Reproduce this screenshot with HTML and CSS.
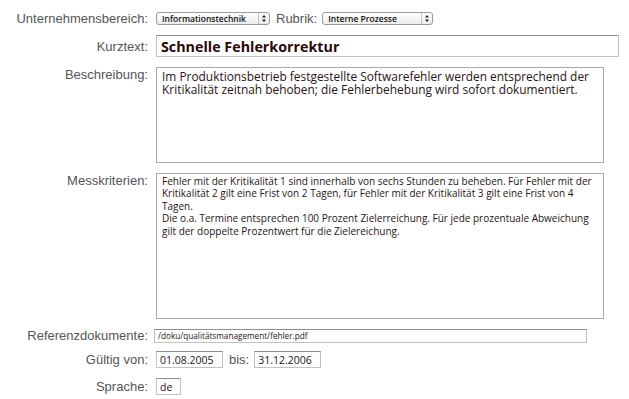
FILE: index.html
```html
<!DOCTYPE html>
<html lang="de">
<head>
    <meta charset="UTF-8">
    <meta name="viewport" content="width=device-width, initial-scale=1.0">
    <title>Messgröße bearbeiten</title>
    <link rel="stylesheet" href="styles.css">
</head>
<body>

    <form class="entry" id="kennzahlForm">
        <div class="row row-head">
            <label class="lbl" for="bereich">Unternehmensbereich:</label>
            <span class="popup popup-bereich">
                <select id="bereich" name="bereich">
                    <option>Informationstechnik</option>
                </select>
                <svg class="popup-arrows" width="11" height="11" viewBox="0 0 11 11">
                    <line x1="0.5" y1="0" x2="0.5" y2="11" stroke="#c4c4c4"/>
                    <path d="M4 4.5 L6 2 L8 4.5 Z" fill="#222"/>
                    <path d="M4 6.5 L6 9 L8 6.5 Z" fill="#222"/>
                </svg>
            </span>
            <label class="lbl-inline" for="rubrik">Rubrik:</label>
            <span class="popup popup-rubrik">
                <select id="rubrik" name="rubrik">
                    <option>Interne Prozesse</option>
                </select>
                <svg class="popup-arrows" width="11" height="11" viewBox="0 0 11 11">
                    <line x1="0.5" y1="0" x2="0.5" y2="11" stroke="#c4c4c4"/>
                    <path d="M4 4.5 L6 2 L8 4.5 Z" fill="#222"/>
                    <path d="M4 6.5 L6 9 L8 6.5 Z" fill="#222"/>
                </svg>
            </span>
        </div>

        <div class="row row-center">
            <label class="lbl" for="kurztext">Kurztext:</label>
            <input type="text" class="field field-title" id="kurztext" name="kurztext" value="Schnelle Fehlerkorrektur">
        </div>

        <div class="row">
            <label class="lbl" for="beschreibung">Beschreibung:</label>
            <textarea class="field area area-short" id="beschreibung" name="beschreibung">Im Produktionsbetrieb festgestellte Softwarefehler werden entsprechend der
Kritikalität zeitnah behoben; die Fehlerbehebung wird sofort dokumentiert.</textarea>
        </div>

        <div class="row row-tight">
            <label class="lbl" for="messkriterien">Messkriterien:</label>
            <textarea class="field area area-long" id="messkriterien" name="messkriterien">Fehler mit der Kritikalität 1 sind innerhalb von sechs Stunden zu beheben. Für Fehler mit der
Kritikalität 2 gilt eine Frist von 2 Tagen, für Fehler mit der Kritikalität 3 gilt eine Frist von 4
Tagen.
Die o.a. Termine entsprechen 100 Prozent Zielerreichung. Für jede prozentuale Abweichung
gilt der doppelte Prozentwert für die Zielereichung.</textarea>
        </div>

        <div class="row row-center row-narrow">
            <label class="lbl" for="referenz">Referenzdokumente:</label>
            <input type="text" class="field field-ref" id="referenz" name="referenz" value="/doku/qualitätsmanagement/fehler.pdf">
        </div>

        <div class="row row-center">
            <label class="lbl" for="von">Gültig von:</label>
            <input type="text" class="field field-date" id="von" name="von" value="01.08.2005">
            <label class="lbl-inline" for="bis">bis:</label>
            <input type="text" class="field field-date" id="bis" name="bis" value="31.12.2006">
        </div>

        <div class="row row-center">
            <label class="lbl" for="sprache">Sprache:</label>
            <input type="text" class="field field-lang" id="sprache" name="sprache" value="de">
        </div>
    </form>

</body>
</html>
```

FILE: styles.css
```css
/* Grundlayout */
body {
    margin: 0;
    font-family: "Liberation Sans", Arial, sans-serif;
    font-size: 13px;
    color: #555;
    background-color: #fff;
}

.entry {
    padding-top: 12px;
}

/* Zeilen mit Beschriftung links */
.row {
    display: flex;
    align-items: flex-start;
    margin-bottom: 10px;
}

.row-center {
    align-items: center;
}

.row-head {
    align-items: center;
    height: 13px;
}

.row-tight {
    margin-bottom: 9px;
}

.row-narrow {
    margin-bottom: 8px;
}

.lbl {
    flex: none;
    width: 148px;
    padding-right: 8px;
    text-align: right;
    line-height: 15px;
}

.lbl-inline {
    padding: 0 5px 0 6px;
    line-height: 15px;
}

/* Auswahllisten im Mac-Stil */
.popup {
    position: relative;
    display: inline-block;
    height: 13px;
    box-sizing: border-box;
    border: 1px solid #9a9a9a;
    border-radius: 3px;
    background: linear-gradient(#ffffff, #ececec);
}

.popup-bereich {
    width: 114px;
}

.popup-rubrik {
    width: 111px;
}

.popup select {
    appearance: none;
    -webkit-appearance: none;
    border: none;
    background: transparent;
    width: 100%;
    height: 11px;
    padding: 0 0 0 5px;
    margin: 0;
    font-family: "Open Sans", sans-serif;
    font-size: 8.5px;
    font-weight: 600;
    line-height: 11px;
    color: #111;
    display: block;
}

.popup-arrows {
    position: absolute;
    right: 0;
    top: 0;
}

/* Eingabefelder */
.field {
    box-sizing: border-box;
    margin: 0;
    border: 1px solid #c2c2c2;
    border-top-color: #8e8e8e;
    background-color: #fff;
    font-family: "Open Sans", sans-serif;
    color: #2a1414;
    outline: none;
}

.field-title {
    width: 463px;
    height: 22px;
    padding: 0 4px;
    font-size: 14.3px;
    font-weight: 700;
    color: #2b0808;
}

.area {
    width: 448px;
    padding: 2px 0 0 5px;
    resize: none;
    overflow: hidden;
    white-space: pre-wrap;
    border-color: #aaa;
}

.area-short {
    height: 96px;
    font-size: 11.9px;
    line-height: 13px;
}

.area-long {
    height: 146px;
    padding-top: 1px;
    font-size: 10px;
    line-height: 12.4px;
}

.field-ref {
    width: 433px;
    height: 14px;
    margin-left: -2px;
    padding: 0 3px;
    font-size: 8.2px;
}

.field-date {
    width: 67px;
    height: 17px;
    padding: 0 3px;
    font-size: 10.5px;
}

.field-lang {
    width: 25px;
    height: 17px;
    padding: 0 3px;
    font-size: 10.5px;
}
```
